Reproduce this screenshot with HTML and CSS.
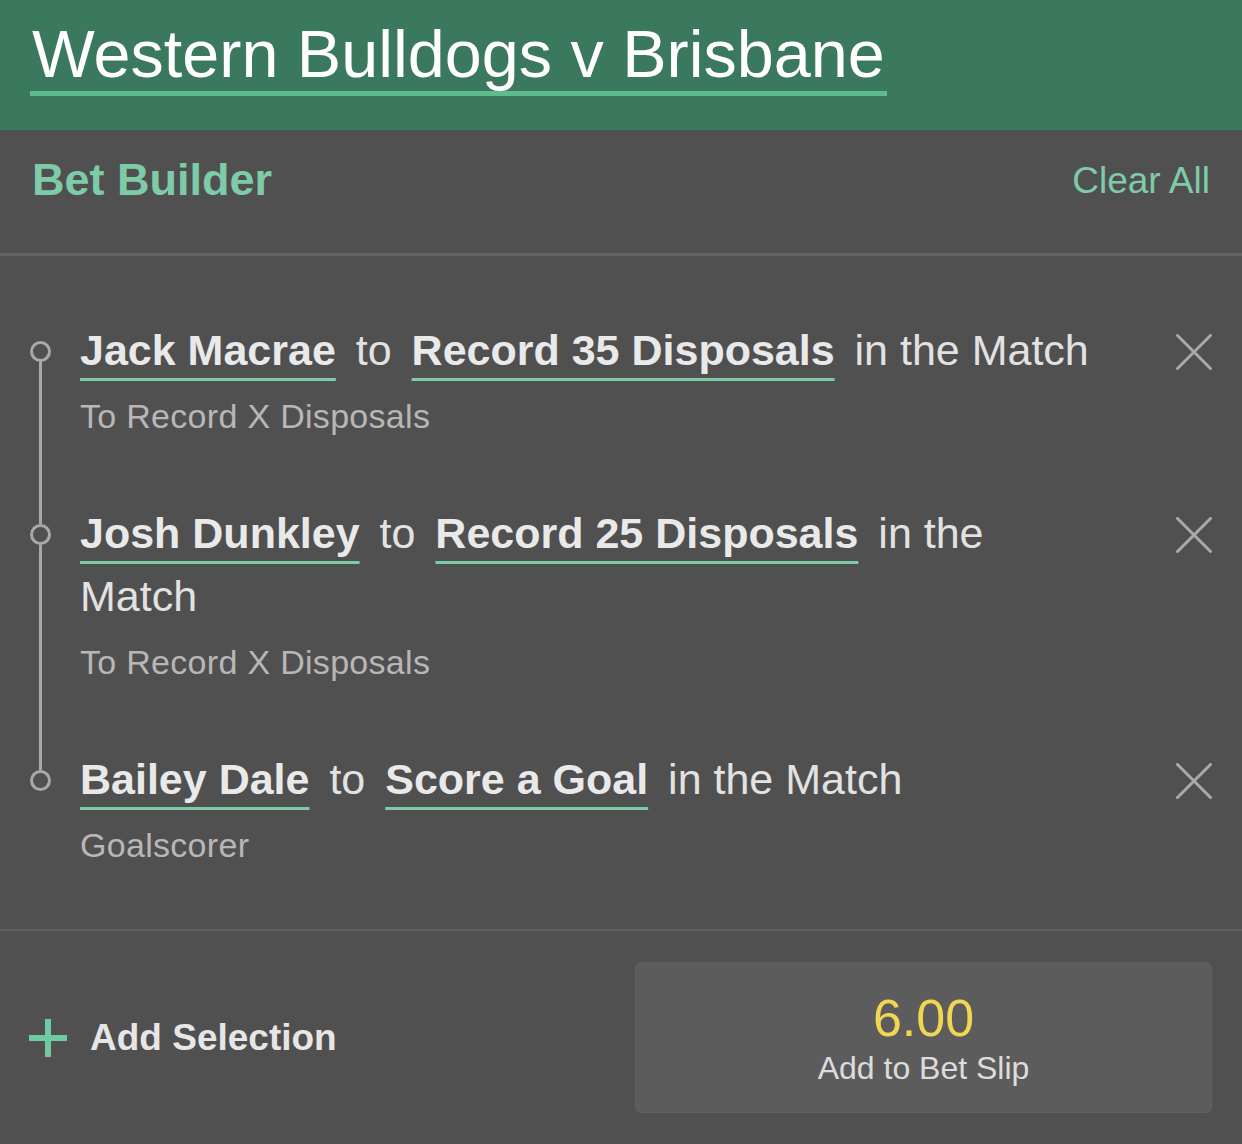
FILE: index.html
```html
<!DOCTYPE html>
<html lang="en">
<head>
<meta charset="utf-8">
<title>Bet Builder</title>
<link rel="stylesheet" href="styles.css">
</head>
<body>
<div class="page">
  <header class="match-header">
    <h1 class="match-title">Western Bulldogs v Brisbane</h1>
  </header>

  <div class="builder-bar">
    <div class="builder-title">Bet Builder</div>
    <div class="clear-all">Clear All</div>
  </div>

  <div class="legs">
    <div class="leg first">
      <div class="marker"><span class="line-top"></span><span class="dot"></span><span class="line-bottom"></span></div>
      <div class="leg-body">
        <div class="leg-main"><span class="sel">Jack Macrae</span> to <span class="sel">Record 35 Disposals</span> in the Match</div>
        <div class="leg-sub">To Record X Disposals</div>
      </div>
      <div class="remove">
        <svg width="36" height="36" viewBox="0 0 36 36"><path d="M1.5 1.5 L34.5 34.5 M34.5 1.5 L1.5 34.5" stroke="#a9a9a9" stroke-width="3" stroke-linecap="round" fill="none"/></svg>
      </div>
    </div>

    <div class="leg">
      <div class="marker"><span class="line-top"></span><span class="dot"></span><span class="line-bottom"></span></div>
      <div class="leg-body">
        <div class="leg-main"><span class="sel">Josh Dunkley</span> to <span class="sel">Record 25 Disposals</span> in the Match</div>
        <div class="leg-sub">To Record X Disposals</div>
      </div>
      <div class="remove">
        <svg width="36" height="36" viewBox="0 0 36 36"><path d="M1.5 1.5 L34.5 34.5 M34.5 1.5 L1.5 34.5" stroke="#a9a9a9" stroke-width="3" stroke-linecap="round" fill="none"/></svg>
      </div>
    </div>

    <div class="leg last">
      <div class="marker"><span class="line-top"></span><span class="dot"></span><span class="line-bottom"></span></div>
      <div class="leg-body">
        <div class="leg-main"><span class="sel">Bailey Dale</span> to <span class="sel">Score a Goal</span> in the Match</div>
        <div class="leg-sub">Goalscorer</div>
      </div>
      <div class="remove">
        <svg width="36" height="36" viewBox="0 0 36 36"><path d="M1.5 1.5 L34.5 34.5 M34.5 1.5 L1.5 34.5" stroke="#a9a9a9" stroke-width="3" stroke-linecap="round" fill="none"/></svg>
      </div>
    </div>
  </div>

  <div class="footer-bar">
    <div class="add-selection">
      <svg class="plus" width="38" height="38" viewBox="0 0 38 38"><path d="M19 0 V38 M0 19 H38" stroke="#6fc9a1" stroke-width="6" fill="none"/></svg>
      <span>Add Selection</span>
    </div>
    <div class="betslip-btn">
      <div class="odds">6.00</div>
      <div class="betslip-label">Add to Bet Slip</div>
    </div>
  </div>
</div>
</body>
</html>
```

FILE: styles.css
```css
* { box-sizing: border-box; }

html, body {
  margin: 0;
  padding: 0;
  background: #505050;
}

body {
  font-family: "Liberation Sans", Arial, sans-serif;
  width: 1242px;
  height: 1144px;
  overflow: hidden;
}

.page {
  width: 1242px;
  min-height: 1144px;
  background: #505050;
}

/* Header */
.match-header {
  background: #3a795d;
  height: 130px;
  padding: 17px 30px 0 30px;
}

.match-title {
  display: inline-block;
  margin: 0;
  font-size: 66.5px;
  font-weight: 400;
  line-height: 74px;
  color: #ffffff;
  border-bottom: 5px solid #5dbb8c;
  padding: 0 2px;
}

/* Bet builder bar */
.builder-bar {
  display: flex;
  justify-content: space-between;
  align-items: center;
  padding: 25px 32px 48px 32px;
  border-bottom: 3px solid #636363;
}

.builder-title {
  font-size: 45px;
  font-weight: 700;
  line-height: 50px;
  color: #7ecba8;
}

.clear-all {
  font-size: 37px;
  line-height: 41px;
  color: #7ecba8;
}

/* Legs */
.legs {
  padding: 63px 30px 64px 0;
  border-bottom: 2px solid #5e5e5e;
}

.leg {
  display: flex;
  align-items: stretch;
}

.marker {
  width: 80px;
  flex: 0 0 80px;
  display: flex;
  flex-direction: column;
  align-items: center;
}

.marker .line-top {
  display: block;
  width: 3px;
  height: 22px;
  background: #a8a8a8;
}

.marker .dot {
  display: block;
  width: 21px;
  height: 21px;
  border: 3px solid #a8a8a8;
  border-radius: 50%;
}

.marker .line-bottom {
  display: block;
  width: 3px;
  flex: 1;
  background: #a8a8a8;
}

.leg.first .line-top,
.leg.last .line-bottom {
  background: transparent;
}

.leg-body {
  flex: 1;
  padding-bottom: 66px;
}

.leg.last .leg-body {
  padding-bottom: 0;
}

.leg-main {
  font-size: 43px;
  line-height: 63px;
  color: #e2e2e2;
}

.sel {
  font-weight: 700;
  color: #e9e9e9;
  text-decoration-line: underline;
  text-decoration-color: #7ecba8;
  text-decoration-thickness: 3px;
  text-underline-offset: 13px;
  text-decoration-skip-ink: none;
  margin: 0 8px;
}

.leg-main .sel:first-child {
  margin-left: 0;
}

.leg-sub {
  margin-top: 14px;
  font-size: 34px;
  line-height: 40px;
  letter-spacing: 0.3px;
  color: #b7b7b7;
}

.remove {
  width: 112px;
  flex: 0 0 112px;
  display: flex;
  justify-content: flex-end;
  align-items: flex-start;
  padding-top: 15px;
}

/* Footer */
.footer-bar {
  display: flex;
  justify-content: space-between;
  align-items: center;
  padding: 31px 30px 31px 29px;
}

.add-selection {
  display: flex;
  align-items: center;
  gap: 23px;
  font-size: 37px;
  font-weight: 700;
  color: #e6e6e6;
}

.plus {
  display: block;
}

.betslip-btn {
  width: 577px;
  height: 151px;
  background: #5c5c5c;
  border: 1px solid #606060;
  border-radius: 6px;
  display: flex;
  flex-direction: column;
  justify-content: center;
  align-items: center;
}

.odds {
  font-size: 52px;
  line-height: 58px;
  color: #f2d652;
}

.betslip-label {
  margin-top: 3px;
  font-size: 32px;
  line-height: 37px;
  color: #dcdcdc;
}
```
